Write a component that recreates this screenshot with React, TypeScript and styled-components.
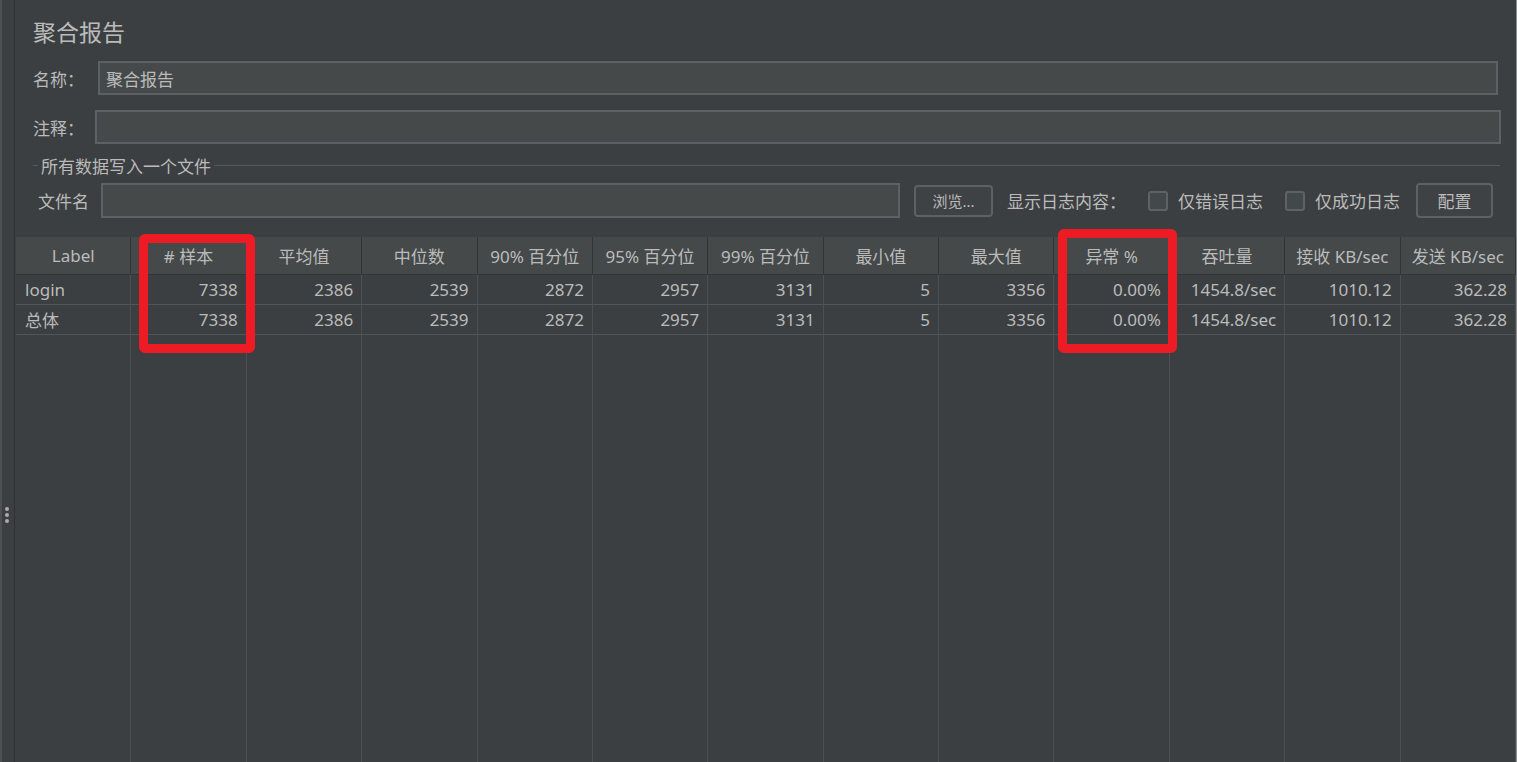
import React from "react";
import styled, { createGlobalStyle } from "styled-components";

const Global = createGlobalStyle`
  html, body { margin: 0; padding: 0; background: #3c3f41; overflow: hidden; }
  * { box-sizing: border-box; }
  body { font-family: "Noto Sans", "Noto Sans CJK SC", sans-serif; color: #bbbbbb; }
`;

const Root = styled.div`
  position: relative;
  display: flex;
  width: 1517px;
  height: 762px;
  background: #3c3f41;
  overflow: hidden;
`;

const Splitter = styled.div`
  width: 15px;
  flex: none;
  border-left: 2px solid #4d5052;
  border-right: 1px solid #2f3133;
  display: flex;
  flex-direction: column;
  align-items: center;
  gap: 2px;
  padding-top: 507px;
  padding-right: 2px;
`;

const Dot = styled.span`
  width: 4px;
  height: 4px;
  border-radius: 50%;
  background: #a9abad;
`;

const Main = styled.div`
  flex: 1;
  display: flex;
  flex-direction: column;
  min-width: 0;
  border-right: 1px solid #8c8e90;
`;

const Form = styled.div`
  display: flex;
  flex-direction: column;
  padding: 0 0 0 18px;
  font-size: 17px;
`;

const Title = styled.div`
  margin-top: 17px;
  height: 30px;
  line-height: 30px;
  font-size: 23px;
  color: #bbbbbb;
`;

const FieldRow = styled.div<{ $mt: number; $h: number; $pr: number }>`
  display: flex;
  align-items: center;
  margin-top: ${(p) => p.$mt}px;
  height: ${(p) => p.$h}px;
  padding-right: ${(p) => p.$pr}px;
`;

const Label = styled.span<{ $w: number; $ml?: number }>`
  width: ${(p) => p.$w}px;
  margin-left: ${(p) => p.$ml ?? 0}px;
  flex: none;
  white-space: nowrap;
  font-size: 17px;
  color: #bbbbbb;
`;

const TextField = styled.div<{ $w?: number }>`
  ${(p) => (p.$w ? `width: ${p.$w}px; flex: none;` : "flex: 1;")}
  height: 100%;
  background: #45494a;
  border: 2px solid #5e6163;
  padding: 0 6px;
  display: flex;
  align-items: center;
  font-size: 17px;
  color: #bbbbbb;
`;

const Group = styled.div`
  display: flex;
  align-items: center;
  margin-top: 11px;
  height: 20px;
  padding-right: 16px;
  gap: 3px;
`;

const GroupLine = styled.span<{ $w?: number }>`
  height: 1px;
  background: #56595b;
  ${(p) => (p.$w ? `width: ${p.$w}px; flex: none;` : "flex: 1;")}
`;

const GroupTitle = styled.span`
  font-size: 17px;
  color: #bbbbbb;
  white-space: nowrap;
`;

const Button = styled.div<{ $w: number; $h: number; $fs: number; $ml: number }>`
  width: ${(p) => p.$w}px;
  height: ${(p) => p.$h}px;
  margin-left: ${(p) => p.$ml}px;
  flex: none;
  border: 2px solid #5e6163;
  border-radius: 4px;
  background: #3f4244;
  display: flex;
  align-items: center;
  justify-content: center;
  font-size: ${(p) => p.$fs}px;
  color: #bbbbbb;
`;

const Check = styled.span<{ $ml: number }>`
  width: 20px;
  height: 20px;
  flex: none;
  margin-left: ${(p) => p.$ml}px;
  margin-right: 10px;
  border: 2px solid #5f6264;
  border-radius: 3px;
  background: #43494a;
`;

const Grid = styled.div`
  margin-top: 19px;
  margin-left: 1px;
  flex: 1;
  display: grid;
  grid-template-columns: repeat(13, 1fr);
  grid-template-rows: 38px 30px 30px 1fr;
  font-size: 17px;
`;

const Head = styled.div`
  background: #45494a;
  border-right: 1px solid #323436;
  border-bottom: 1px solid #323436;
  display: flex;
  align-items: center;
  justify-content: center;
  white-space: nowrap;
  color: #bbbbbb;
`;

const Cell = styled.div<{ $left?: boolean }>`
  border-right: 1px solid #4c5052;
  border-bottom: 1px solid #515557;
  display: flex;
  align-items: center;
  justify-content: ${(p) => (p.$left ? "flex-start" : "flex-end")};
  padding: ${(p) => (p.$left ? "0 0 0 9px" : "0 8px 0 0")};
  white-space: nowrap;
  color: #bbbbbb;
`;

const Filler = styled.div`
  border-right: 1px solid #4c5052;
`;

const Mark = styled.div<{ $x: number; $y: number; $w: number; $h: number }>`
  position: absolute;
  left: ${(p) => p.$x}px;
  top: ${(p) => p.$y}px;
  width: ${(p) => p.$w}px;
  height: ${(p) => p.$h}px;
  border: 9px solid #ed1c24;
  border-radius: 6px;
  pointer-events: none;
`;

const headers = [
  "Label",
  "# 样本",
  "平均值",
  "中位数",
  "90% 百分位",
  "95% 百分位",
  "99% 百分位",
  "最小值",
  "最大值",
  "异常 %",
  "吞吐量",
  "接收 KB/sec",
  "发送 KB/sec",
];

const rows = [
  ["login", "7338", "2386", "2539", "2872", "2957", "3131", "5", "3356", "0.00%", "1454.8/sec", "1010.12", "362.28"],
  ["总体", "7338", "2386", "2539", "2872", "2957", "3131", "5", "3356", "0.00%", "1454.8/sec", "1010.12", "362.28"],
];

export default function App() {
  return (
    <>
      <Global />
      <Root>
        <Splitter>
          <Dot />
          <Dot />
          <Dot />
        </Splitter>
        <Main>
          <Form>
            <Title>聚合报告</Title>
            <FieldRow $mt={14} $h={34} $pr={18}>
              <Label $w={65}>名称：</Label>
              <TextField>聚合报告</TextField>
            </FieldRow>
            <FieldRow $mt={15} $h={34} $pr={15}>
              <Label $w={62}>注释：</Label>
              <TextField />
            </FieldRow>
            <Group>
              <GroupLine $w={5} />
              <GroupTitle>所有数据写入一个文件</GroupTitle>
              <GroupLine />
            </Group>
            <FieldRow $mt={8} $h={35} $pr={24}>
              <Label $w={63} $ml={5}>文件名</Label>
              <TextField $w={799} />
              <Button $w={79} $h={32} $fs={15} $ml={14}>浏览...</Button>
              <Label $w={119} $ml={14}>显示日志内容：</Label>
              <Check $ml={22} />
              <Label $w={85}>仅错误日志</Label>
              <Check $ml={22} />
              <Label $w={85}>仅成功日志</Label>
              <Button $w={77} $h={35} $fs={17} $ml={16}>配置</Button>
            </FieldRow>
          </Form>
          <Grid>
            {headers.map((h) => (
              <Head key={h}>{h}</Head>
            ))}
            {rows.map((r, ri) =>
              r.map((v, ci) => (
                <Cell key={`${ri}-${ci}`} $left={ci === 0}>
                  {v}
                </Cell>
              ))
            )}
            {headers.map((h) => (
              <Filler key={`f-${h}`} />
            ))}
          </Grid>
        </Main>
        <Mark $x={139} $y={234} $w={116} $h={119} />
        <Mark $x={1058} $y={229} $w={119} $h={124} />
      </Root>
    </>
  );
}
